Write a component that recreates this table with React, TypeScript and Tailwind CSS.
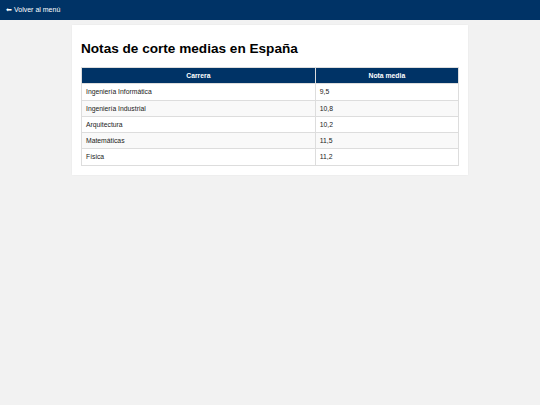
import React from "react";

const rows: [string, string][] = [
  ["Ingeniería Informática", "9,5"],
  ["Ingeniería Industrial", "10,8"],
  ["Arquitectura", "10,2"],
  ["Matemáticas", "11,5"],
  ["Física", "11,2"],
];

export default function App() {
  return (
    <div className="min-h-[405px] w-[540px] bg-[#f2f2f2] font-['Liberation_Sans',Arial,sans-serif]">
      <div className="flex h-[20px] items-center bg-[#003366] px-[6px] text-[7px] text-white">
        <span className="mr-[2px]">⬅</span>
        <span>Volver al menú</span>
      </div>
      <div className="mx-auto mt-[5px] w-[396px] bg-white p-[9px] shadow-[0_0_2px_rgba(0,0,0,0.05)]">
        <h1 className="mt-[7px] mb-[10px] text-[13.6px] leading-[16px] font-bold text-black">
          Notas de corte medias en España
        </h1>
        <table className="w-full border-collapse text-[6.8px] leading-[7.3px]">
          <thead>
            <tr className="bg-[#003366] text-white">
              <th className="w-[62%] border border-[#dddddd] px-[4px] py-[4px] text-center font-bold">Carrera</th>
              <th className="border border-[#dddddd] px-[4px] py-[4px] text-center font-bold">Nota media</th>
            </tr>
          </thead>
          <tbody>
            {rows.map(([c, n], i) => (
              <tr key={c} className={i % 2 === 1 ? "bg-[#f9f9f9]" : "bg-white"}>
                <td className="border border-[#dddddd] px-[4px] py-[4px] text-[#222]">{c}</td>
                <td className="border border-[#dddddd] px-[4px] py-[4px] text-[#222]">{n}</td>
              </tr>
            ))}
          </tbody>
        </table>
      </div>
    </div>
  );
}
